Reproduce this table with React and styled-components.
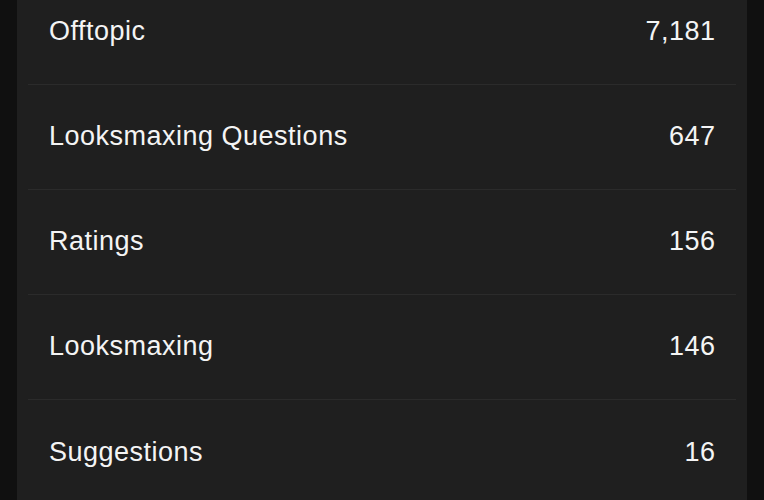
import React from "react";
import styled, { createGlobalStyle } from "styled-components";

const forums = [
  { name: "Offtopic", count: "7,181" },
  { name: "Looksmaxing Questions", count: "647" },
  { name: "Ratings", count: "156" },
  { name: "Looksmaxing", count: "146" },
  { name: "Suggestions", count: "16" },
];

export default function App() {
  return (
    <>
      <GlobalStyle />
      <Page>
        <Panel>
          <List>
            {forums.map((f, i) => (
              <Row key={f.name} last={i === forums.length - 1}>
                <Name>{f.name}</Name>
                <Count>{f.count}</Count>
              </Row>
            ))}
          </List>
        </Panel>
      </Page>
    </>
  );
}

const GlobalStyle = createGlobalStyle`
  html, body {
    margin: 0;
    padding: 0;
    background: #101010;
    overflow: hidden;
  }
`;

const Page = styled.div`
  width: 764px;
  height: 500px;
  background: #101010;
  padding: 0 17px;
  box-sizing: border-box;
  overflow: hidden;
`;

const Panel = styled.div`
  height: 100%;
  background: #1f1f1f;
  padding: 0 11px;
  overflow: hidden;
`;

const List = styled.div`
  display: flex;
  flex-direction: column;
  margin-top: -20px;
`;

const Row = styled.div`
  display: flex;
  align-items: center;
  justify-content: space-between;
  box-sizing: border-box;
  height: 105px;
  flex-shrink: 0;
  padding: 0 21px 1px 21px;
  border-bottom: ${(p) => (p.last ? "none" : "1px solid #2b2b2b")};
  font-family: "Liberation Sans", Arial, sans-serif;
  font-size: 27px;
  letter-spacing: 0.5px;
  color: #f4f4f4;
`;

const Name = styled.span``;

const Count = styled.span`
  margin-right: -0.5px;
`;
